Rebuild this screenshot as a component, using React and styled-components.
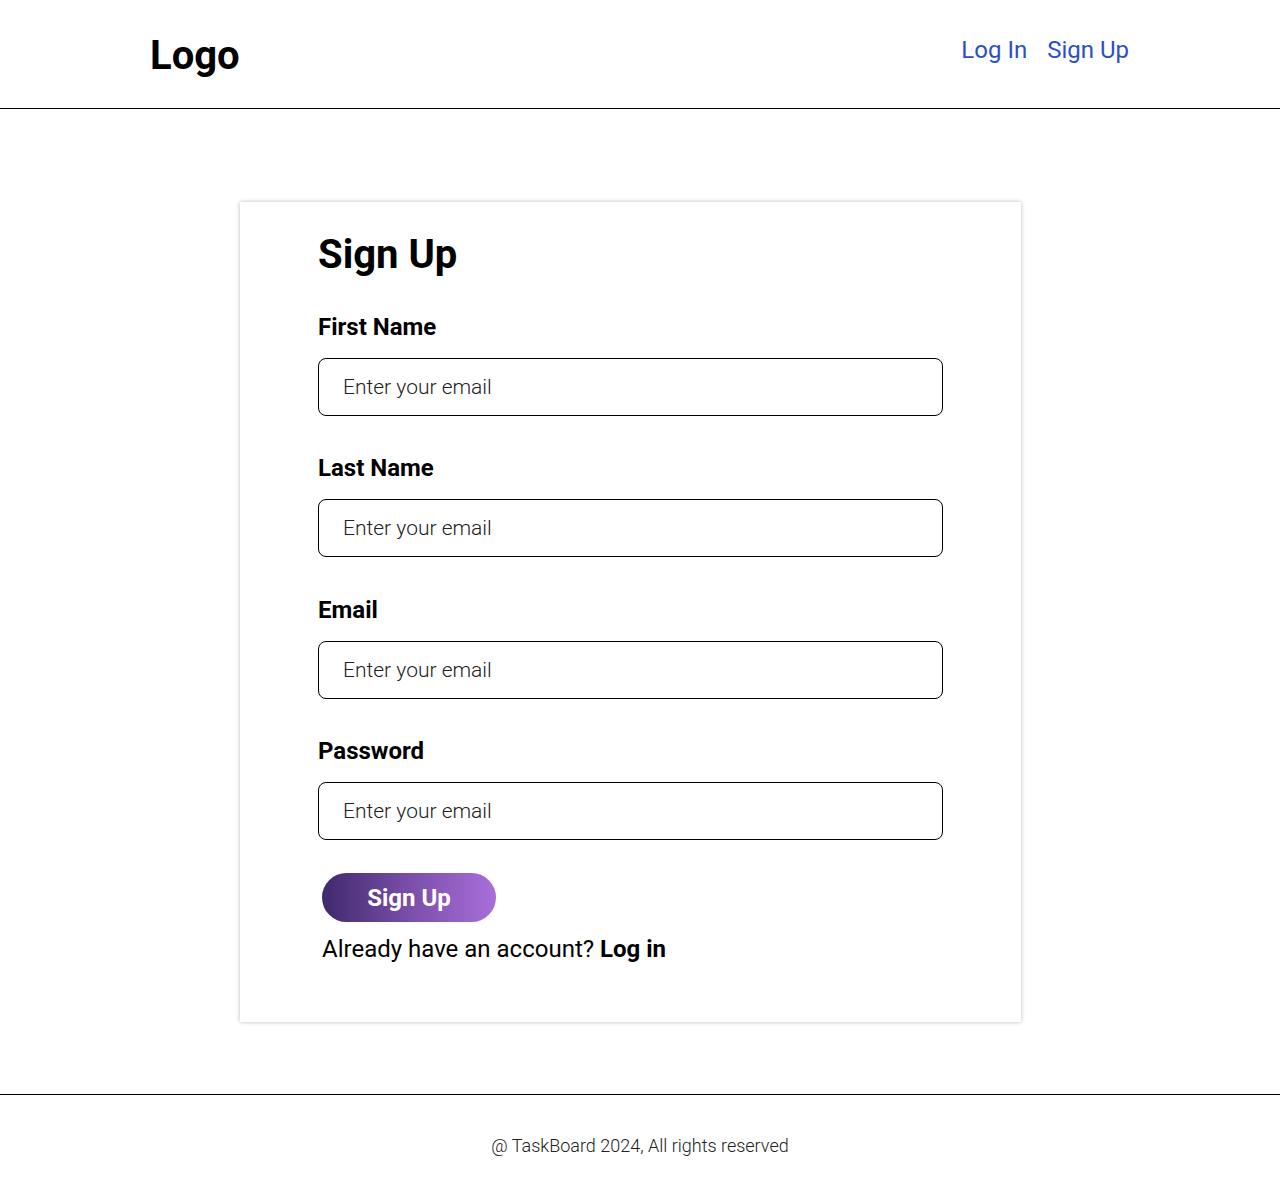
import React from "react";
import styled, { createGlobalStyle } from "styled-components";

const Global = createGlobalStyle`
  html, body { margin: 0; padding: 0; background: #fff; }
  body { font-family: Roboto, "Noto Sans", Arial, sans-serif; color: #000; }
  * { box-sizing: border-box; }
`;

const Page = styled.div`
  min-height: 1198px;
  display: flex;
  flex-direction: column;
`;

const Header = styled.header`
  height: 109px;
  border-bottom: 1px solid #000;
  display: flex;
  justify-content: space-between;
  align-items: flex-start;
  padding: 0 151px 0 150px;
`;

const Logo = styled.div`
  font-size: 40px;
  font-weight: 700;
  line-height: 46px;
  margin-top: 33px;
`;

const Nav = styled.nav`
  display: flex;
  gap: 20px;
  margin-top: 35px;
`;

const NavLink = styled.a`
  font-size: 24px;
  line-height: 30px;
  color: #2b50c4;
  text-decoration: none;
`;

const Main = styled.main`
  flex: 1;
  display: flex;
  justify-content: center;
  align-items: flex-start;
  padding: 93px 0 72px;
`;

const Card = styled.section`
  width: 781px;
  min-height: 820px;
  margin-right: 19px;
  background: #fff;
  box-shadow: 0 0 4px rgba(0, 0, 0, 0.28);
  padding: 31px 78px 40px;
`;

const Title = styled.h1`
  margin: -1px 0 35px;
  font-size: 40px;
  font-weight: 700;
  line-height: 46px;
`;

const Field = styled.div`
  display: flex;
  flex-direction: column;
  margin-bottom: 38.4px;
  &:last-of-type { margin-bottom: 33px; }
`;

const Label = styled.label`
  font-size: 24px;
  font-weight: 700;
  line-height: 28px;
  margin-bottom: 17px;
`;

const Input = styled.input`
  width: 625px;
  height: 58px;
  border: 1px solid #000;
  border-radius: 8px;
  padding: 0 24px;
  font-family: Roboto, Arial, sans-serif;
  font-size: 21px;
  font-weight: 300;
  color: #222;
  outline: none;
  &::placeholder { color: #222; opacity: 1; }
`;

const Button = styled.button`
  margin-left: 4px;
  width: 174px;
  height: 49px;
  border: none;
  border-radius: 25px;
  background: linear-gradient(90deg, #3f296c 0%, #7a4ea8 50%, #a96edb 100%);
  color: #fff;
  font-family: Roboto, Arial, sans-serif;
  font-size: 24px;
  font-weight: 700;
  cursor: pointer;
  display: block;
`;

const Switch = styled.p`
  margin: 12px 0 0 4px;
  font-size: 24px;
  line-height: 30px;
  b { font-weight: 700; }
`;

const Footer = styled.footer`
  border-top: 1px solid #000;
  height: 104px;
  display: flex;
  justify-content: center;
  align-items: center;
`;

const FooterText = styled.span`
  font-size: 18px;
  font-weight: 300;
  color: #222;
  margin-top: -2px;
`;

const fields = ["First Name", "Last Name", "Email", "Password"];

export default function App() {
  return (
    <Page>
      <Global />
      <Header>
        <Logo>Logo</Logo>
        <Nav>
          <NavLink href="#">Log In</NavLink>
          <NavLink href="#">Sign Up</NavLink>
        </Nav>
      </Header>
      <Main>
        <Card>
          <Title>Sign Up</Title>
          {fields.map((f) => (
            <Field key={f}>
              <Label>{f}</Label>
              <Input placeholder="Enter your email" type={f === "Password" ? "password" : "text"} />
            </Field>
          ))}
          <Button>Sign Up</Button>
          <Switch>
            Already have an account? <b>Log in</b>
          </Switch>
        </Card>
      </Main>
      <Footer>
        <FooterText>@ TaskBoard 2024, All rights reserved</FooterText>
      </Footer>
    </Page>
  );
}
